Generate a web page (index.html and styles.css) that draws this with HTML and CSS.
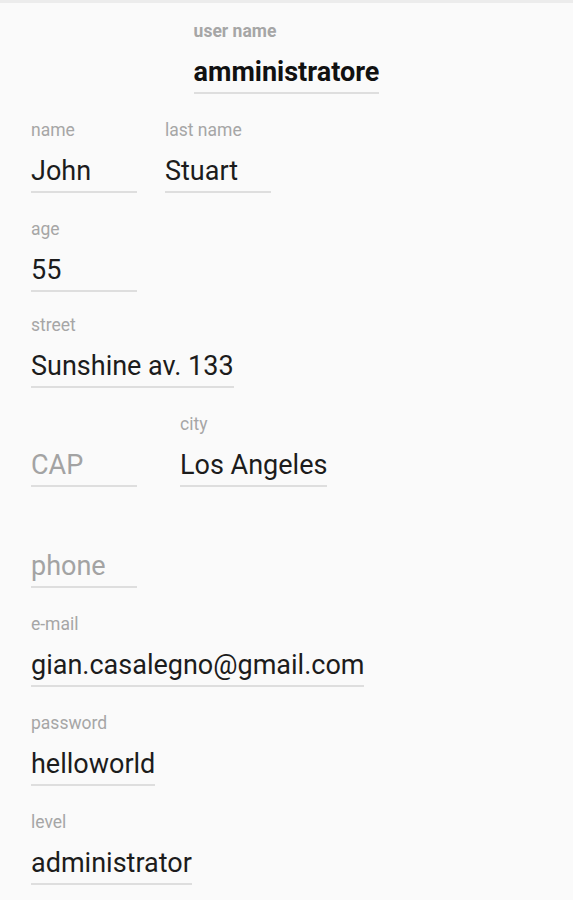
FILE: index.html
```html
<!DOCTYPE html>
<html lang="en">
<head>
    <meta charset="UTF-8">
    <meta name="viewport" content="width=device-width, initial-scale=1.0">
    <title>Profilo utente</title>
    <link rel="stylesheet" href="styles.css">
</head>
<body>
    <div class="form">
        <!-- user name -->
        <div class="row row-center">
            <div class="field field-bold">
                <div class="label">user name</div>
                <div class="value">amministratore</div>
            </div>
        </div>

        <div class="row">
            <div class="field">
                <div class="label">name</div>
                <div class="value">John</div>
            </div>
            <div class="field">
                <div class="label">last name</div>
                <div class="value">Stuart</div>
            </div>
        </div>

        <div class="row">
            <div class="field">
                <div class="label">age</div>
                <div class="value">55</div>
            </div>
        </div>

        <div class="row row-street">
            <div class="field">
                <div class="label">street</div>
                <div class="value">Sunshine av. 133</div>
            </div>
        </div>

        <div class="row row-wide">
            <div class="field">
                <div class="label"></div>
                <div class="value empty">CAP</div>
            </div>
            <div class="field">
                <div class="label">city</div>
                <div class="value">Los Angeles</div>
            </div>
        </div>

        <div class="row row-phone">
            <div class="field">
                <div class="label"></div>
                <div class="value empty">phone</div>
            </div>
        </div>

        <div class="row">
            <div class="field">
                <div class="label">e-mail</div>
                <div class="value">gian.casalegno@gmail.com</div>
            </div>
        </div>

        <div class="row">
            <div class="field">
                <div class="label">password</div>
                <div class="value">helloworld</div>
            </div>
        </div>

        <div class="row">
            <div class="field">
                <div class="label">level</div>
                <div class="value">administrator</div>
            </div>
        </div>
    </div>
</body>
</html>
```

FILE: styles.css
```css
body {
    margin: 0;
    padding: 0;
    background-color: #fafafa;
    font-family: Roboto, 'Noto Sans', sans-serif;
    color: #1c1c1c;
}
.form {
    display: flex;
    flex-direction: column;
    gap: 26px;
    padding: 18px 0 0 31px;
    border-top: 3px solid #ececec;
}
.row {
    display: flex;
    gap: 28px;
}
.row-center {
    justify-content: center;
    padding-right: 31px;
}
.row-wide {
    gap: 43px;
}
.row-street {
    margin-top: -3px;
}
.row-phone {
    margin-top: 2px;
}
.field {
    display: flex;
    flex-direction: column;
    align-items: flex-start;
}
.label {
    height: 20px;
    line-height: 20px;
    font-size: 17.5px;
    color: #a6a6a6;
    margin-bottom: 15px;
}
.value {
    min-width: 106px;
    line-height: 32px;
    font-size: 27px;
    padding-bottom: 4px;
    border-bottom: 2px solid #dedede;
}
.value.empty {
    color: #a3a3a3;
}
.field-bold .label,
.field-bold .value {
    font-weight: bold;
}
.field-bold .value {
    color: #111;
}
```
